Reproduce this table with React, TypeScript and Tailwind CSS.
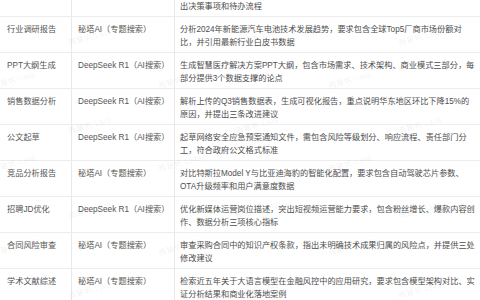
import React from "react";

type Row = { task: string; tool: string; lines: string[] };

const rows: Row[] = [
  { task: "会议纪要整理", tool: "DeepSeek R1（AI搜索）", lines: ["整理周例会录音转写稿，生成结构化会议纪要，标注", "出决策事项和待办流程"] },
  { task: "行业调研报告", tool: "秘塔AI（专题搜索）", lines: ["分析2024年新能源汽车电池技术发展趋势，要求包含全球Top5厂商市场份额对", "比，并引用最新行业白皮书数据"] },
  { task: "PPT大纲生成", tool: "DeepSeek R1（AI搜索）", lines: ["生成智慧医疗解决方案PPT大纲，包含市场需求、技术架构、商业模式三部分，每", "部分提供3个数据支撑的论点"] },
  { task: "销售数据分析", tool: "DeepSeek R1（AI搜索）", lines: ["解析上传的Q3销售数据表，生成可视化报告，重点说明华东地区环比下降15%的", "原因，并提出三条改进建议"] },
  { task: "公文起草", tool: "DeepSeek R1（AI搜索）", lines: ["起草网络安全应急预案通知文件，需包含风险等级划分、响应流程、责任部门分", "工，符合政府公文格式标准"] },
  { task: "竞品分析报告", tool: "秘塔AI（专题搜索）", lines: ["对比特斯拉Model Y与比亚迪海豹的智能化配置，要求包含自动驾驶芯片参数、", "OTA升级频率和用户满意度数据"] },
  { task: "招聘JD优化", tool: "DeepSeek R1（AI搜索）", lines: ["优化新媒体运营岗位描述，突出短视频运营能力要求，包含粉丝增长、爆款内容创", "作、数据分析三项核心指标"] },
  { task: "合同风险审查", tool: "秘塔AI（专题搜索）", lines: ["审查采购合同中的知识产权条款，指出未明确技术成果归属的风险点，并提供三处", "修改建议"] },
  { task: "学术文献综述", tool: "秘塔AI（专题搜索）", lines: ["检索近五年关于大语言模型在金融风控中的应用研究，要求包含模型架构对比、实", "证分析结果和商业化落地案例"] },
];

const marks: [number, number][] = [];
const ys = [37, 80, 125, 163, 210, 247, 290];
ys.forEach((y, i) => {
  const xs = i % 2 === 0 ? [88, 255, 418] : [12, 178, 348];
  xs.forEach((x) => marks.push([x, y]));
});

export default function App() {
  return (
    <div
      className="relative w-[480px] h-[300px] overflow-hidden bg-white text-[#555555]"
      style={{ fontFamily: '"Liberation Sans", "Noto Sans CJK SC", sans-serif' }}
    >
      <div className="mt-[-19px] flex flex-col text-[8.2px] leading-[13px]">
        {rows.map((r, i) => (
          <div key={i} className="flex border-b border-[#ececec]">
            <div className="w-[72px] shrink-0 border-r border-[#e8e8e8] pl-[7px] pt-[6px] pb-[3px] whitespace-nowrap">
              {r.task}
            </div>
            <div className="w-[103px] shrink-0 border-r border-[#e8e8e8] pl-[6px] pt-[6px] pb-[3px] whitespace-nowrap overflow-hidden">
              {r.tool}
            </div>
            <div className="flex-1 pl-[5px] pt-[6px] pb-[3px] text-[#4d4d4d]">
              {r.lines.map((l, j) => (
                <div key={j} className="whitespace-nowrap">
                  {l}
                </div>
              ))}
            </div>
          </div>
        ))}
      </div>
      {marks.map(([x, y], i) => (
        <div
          key={i}
          className="pointer-events-none absolute whitespace-nowrap text-[8px] text-[#000000]/[0.07] -rotate-[15deg]"
          style={{ left: x - 20, top: y - 5 }}
        >
          腾慧帆 1348
        </div>
      ))}
    </div>
  );
}
